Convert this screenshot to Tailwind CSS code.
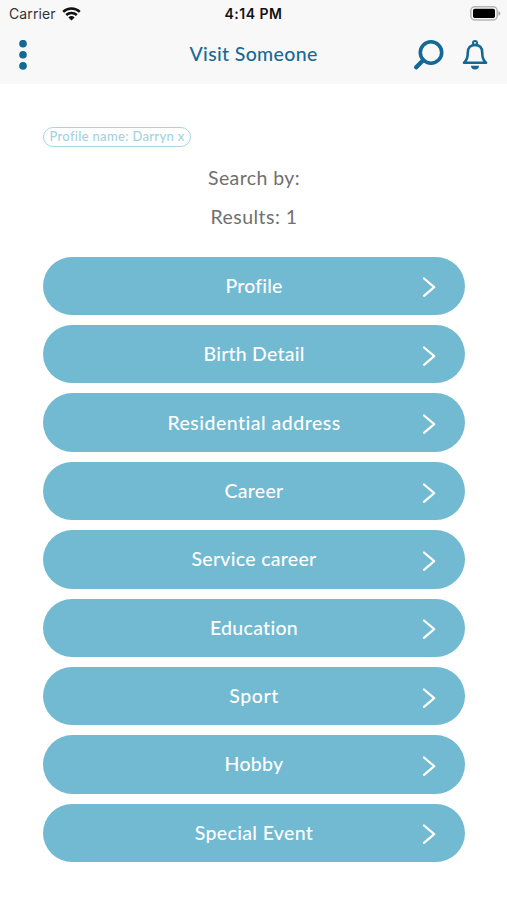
<!DOCTYPE html>
<html lang="en">
<head>
<meta charset="utf-8">
<title>Visit Someone</title>
<script src="https://cdn.jsdelivr.net/npm/@tailwindcss/browser@4"></script>
</head>
<body class="w-[507px] h-[900px] overflow-hidden bg-white font-['Lato','Noto_Sans',sans-serif]">
<svg class="hidden"><symbol id="chevron" viewBox="0 0 14 22"><path d="M2 2.500L12.200 11.200 2 19.900" fill="none" stroke="#fff" stroke-width="2.200" stroke-linecap="round" stroke-linejoin="round"/></symbol></svg>
<header class="h-[84px] bg-[#f8f8f8]">
  <div class="h-7 pb-px grid grid-cols-3 items-center font-['Inter','Liberation_Sans',sans-serif] text-[14px] text-[#111]">
    <div class="flex items-center gap-[6px] pl-[9px]">
      <span class="text-[#333] tracking-[0.1px]">Carrier</span>
      <svg class="w-[19px] h-[14px]" viewBox="0 0 19 14" fill="none" stroke="#111" stroke-width="2.5"><path d="M1.2 4.8a12 12 0 0 1 16.6 0M4.2 8a7.8 7.8 0 0 1 10.6 0"/><path d="M6.4 10.4a4.4 4.4 0 0 1 6.2 0L9.5 13.6z" fill="#111" stroke="none"/></svg>
    </div>
    <span class="text-center font-semibold text-[14px] tracking-[0.5px]">4:14 PM</span>
    <div class="flex justify-end pr-[6px]">
      <svg class="w-[31px] h-[15px]" viewBox="0 0 31 15"><rect x=".8" y=".8" width="26.4" height="13.2" rx="4" fill="#f8f8f8" stroke="#b5b5b5" stroke-width="1.5"/><rect x="3" y="2.7" width="22" height="9.4" rx="1.8" fill="#000"/><path d="M28.4 5q2 .6 2 2.4t-2 2.4z" fill="#aaa"/></svg>
    </div>
  </div>
  <div class="h-[54px] grid grid-cols-[100px_1fr_100px] items-center">
    <svg class="w-2 h-[30px] ml-[19px]" viewBox="0 0 8 30" fill="#136895"><circle cx="4" cy="3.7" r="3.8"/><circle cx="4" cy="14.8" r="3.8"/><circle cx="4" cy="25.9" r="3.8"/></svg>
    <h1 class="pb-[2px] text-center text-[19.5px] font-medium text-[#186a94] tracking-[0.35px]">Visit Someone</h1>
    <div class="flex items-center gap-[18px] pl-[6px]">
      <svg class="w-[31px] h-[31px] shrink-0" viewBox="0 0 31 31" fill="none" stroke="#136895"><circle cx="18" cy="12.5" r="10.7" stroke-width="3.6"/><path d="M10.2 20.3L3.2 27.3" stroke-width="4.4" stroke-linecap="round"/></svg>
      <svg class="w-[26px] h-[30px] shrink-0" viewBox="0 0 26 30" fill="none" stroke="#136895" stroke-width="2.6" stroke-linejoin="round"><circle cx="13" cy="3.1" r="2" stroke-width="2"/><path d="M2 22.8C4.8 20.5 5.8 18 5.8 12.5C5.8 7.7 8.6 5 13 5s7.2 2.7 7.2 7.5C20.2 18 21.2 20.5 24 22.8z"/><path d="M9 25.8h8a4 3.7 0 0 1-8 0z" fill="#136895" stroke="none"/></svg>
    </div>
  </div>
</header>
<main class="pl-[43px] pr-[42px] pt-[43px]">
  <div class="w-[148px] h-5 rounded-full border-[1.5px] border-[#a9d5e1] flex items-center justify-center text-[13px] font-medium text-[#a3d3e0] whitespace-nowrap tracking-[0.32px]">Profile name: Darryn x</div>
  <div class="mt-[11px] text-center text-[19.5px] leading-[39px] text-[#707070]">
    <p class="tracking-[0.4px]">Search by:</p>
    <p class="tracking-[0.45px]">Results: 1</p>
  </div>
  <nav class="mt-[20.6px] flex flex-col gap-[9.9px] text-[19.5px] font-medium text-white">
    <a class="h-[58.5px] rounded-full bg-[#72b9d2] grid grid-cols-[50px_1fr_50px] items-center text-center"><span class="col-start-2 pb-px tracking-[0.15px]">Profile</span><svg class="w-[14px] h-[22px] mt-[3px] ml-[7px]"><use href="#chevron"/></svg></a>
    <a class="h-[58.5px] rounded-full bg-[#72b9d2] grid grid-cols-[50px_1fr_50px] items-center text-center"><span class="col-start-2 pb-px tracking-[0.22px]">Birth Detail</span><svg class="w-[14px] h-[22px] mt-[3px] ml-[7px]"><use href="#chevron"/></svg></a>
    <a class="h-[58.5px] rounded-full bg-[#72b9d2] grid grid-cols-[50px_1fr_50px] items-center text-center"><span class="col-start-2 pb-px tracking-[0.48px]">Residential address</span><svg class="w-[14px] h-[22px] mt-[3px] ml-[7px]"><use href="#chevron"/></svg></a>
    <a class="h-[58.5px] rounded-full bg-[#72b9d2] grid grid-cols-[50px_1fr_50px] items-center text-center"><span class="col-start-2 pb-px tracking-[0.3px]">Career</span><svg class="w-[14px] h-[22px] mt-[3px] ml-[7px]"><use href="#chevron"/></svg></a>
    <a class="h-[58.5px] rounded-full bg-[#72b9d2] grid grid-cols-[50px_1fr_50px] items-center text-center"><span class="col-start-2 pb-px tracking-[0.3px]">Service career</span><svg class="w-[14px] h-[22px] mt-[3px] ml-[7px]"><use href="#chevron"/></svg></a>
    <a class="h-[58.5px] rounded-full bg-[#72b9d2] grid grid-cols-[50px_1fr_50px] items-center text-center"><span class="col-start-2 pb-px tracking-[0.3px]">Education</span><svg class="w-[14px] h-[22px] mt-[3px] ml-[7px]"><use href="#chevron"/></svg></a>
    <a class="h-[58.5px] rounded-full bg-[#72b9d2] grid grid-cols-[50px_1fr_50px] items-center text-center"><span class="col-start-2 pb-px tracking-[0.6px]">Sport</span><svg class="w-[14px] h-[22px] mt-[3px] ml-[7px]"><use href="#chevron"/></svg></a>
    <a class="h-[58.5px] rounded-full bg-[#72b9d2] grid grid-cols-[50px_1fr_50px] items-center text-center"><span class="col-start-2 pb-px tracking-[0.3px]">Hobby</span><svg class="w-[14px] h-[22px] mt-[3px] ml-[7px]"><use href="#chevron"/></svg></a>
    <a class="h-[58.5px] rounded-full bg-[#72b9d2] grid grid-cols-[50px_1fr_50px] items-center text-center"><span class="col-start-2 pb-px tracking-[0.35px]">Special Event</span><svg class="w-[14px] h-[22px] mt-[3px] ml-[7px]"><use href="#chevron"/></svg></a>
  </nav>
</main>
</body>
</html>
